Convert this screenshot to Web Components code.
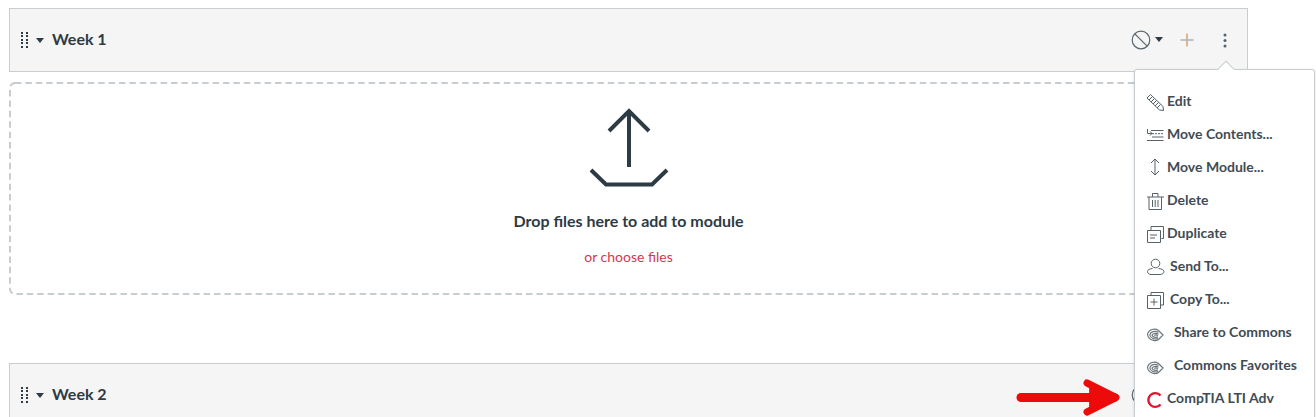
<!DOCTYPE html>
<html>
<head>
<meta charset="utf-8">
<title>Modules</title>
<style>
  html, body { height: 100%; }
  body {
    margin: 0;
    padding: 8px 68px 0 9px;
    box-sizing: border-box;
    height: 417px;
    overflow: hidden;
    position: relative;
    background: #fff;
    font-family: Lato, "Liberation Sans", sans-serif;
    color: #2d3b45;
  }
  svg.i { width: 22px; height: 22px; fill: none; stroke: #56626a; stroke-width: 1; display: block; }
</style>
</head>
<body>
  <module-header>Week 1</module-header>
  <drop-zone></drop-zone>
  <module-header style="margin-top:68px">Week 2</module-header>

  <module-menu>
    <menu-item><svg class="i" slot="icon" viewBox="0 0 22 22"><path d="M3 7 6.500 3.500 19 15.500 19.500 19.500 15.500 19Z"/><path d="M5 9 8.500 5.500M7 11 10.500 7.500M9 13 12.500 9.500M11 15 14.500 11.500M13 17 16.500 13.500"/></svg>Edit</menu-item>
    <menu-item><svg class="i" slot="icon" viewBox="0 0 22 22"><path d="M7 6.500H19.500M8 13H19.500M3 16.500H19.500"/><path d="M8 9.700H19.500" stroke-dasharray="2 1"/><path d="M3.500 5V9.500H8M6 7.500 8 9.500 6 11.500"/></svg>Move Contents...</menu-item>
    <menu-item><svg class="i" slot="icon" viewBox="0 0 22 22"><path d="M11 2V18M7 6 11 2 15 6M7 14 11 18 15 14"/></svg>Move Module...</menu-item>
    <menu-item><svg class="i" slot="icon" viewBox="0 0 22 22"><path d="M3 7H20M8.500 7V3.500H14V7M5 7V19.500H17.500V7M8.500 10V17M11.200 10V17M14 10V17"/></svg>Delete</menu-item>
    <menu-item><svg class="i" slot="icon" viewBox="0 0 22 22"><path d="M7 7V3.500H19.500V15.500H17.500"/><path d="M3.500 7.500H16.500V19.500H3.500ZM6 12H13M6 15H11"/></svg>Duplicate</menu-item>
    <menu-item gap="3"><svg class="i" slot="icon" viewBox="0 0 22 22"><circle cx="11.500" cy="7.500" r="4.300"/><path d="M8.500 12.500C6 12.800 3.500 13.500 3.500 15.500 3.500 17.500 5.500 18.500 7 18.500H16C18 18.500 20 17.500 20 15.500 20 13.500 17 12.800 14.500 12.500"/></svg>Send To...</menu-item>
    <menu-item gap="3"><svg class="i" slot="icon" viewBox="0 0 22 22"><path d="M7 6V3.500H19.500V16H17"/><path d="M3.500 6.500H16.500V19.500H3.500ZM10 9.500V16.500M6.500 13H13.500"/></svg>Copy To...</menu-item>
    <menu-item gap="7"><svg class="i" slot="icon" viewBox="0 0 22 22" style="stroke:#6a757c;stroke-width:1.200"><path d="M19 13 14.500 8.500C11 6 4.500 7 3.500 12.500 4.500 18 11 20 14.500 17.500Z"/><path d="M14.500 10.500C11 8.500 6.500 9.500 5.800 13 6.500 16.500 11 18 14 16.200"/><path d="M14.500 12.300C12 10.800 8.500 11.300 8 13.200 8.500 15 12 16 14 14.800"/><path d="M14 13.500C12.500 12.800 10.800 13 10.300 13.500"/></svg>Share to Commons</menu-item>
    <menu-item gap="7"><svg class="i" slot="icon" viewBox="0 0 22 22" style="stroke:#6a757c;stroke-width:1.200"><path d="M19 13 14.500 8.500C11 6 4.500 7 3.500 12.500 4.500 18 11 20 14.500 17.500Z"/><path d="M14.500 10.500C11 8.500 6.500 9.500 5.800 13 6.500 16.500 11 18 14 16.200"/><path d="M14.500 12.300C12 10.800 8.500 11.300 8 13.200 8.500 15 12 16 14 14.800"/><path d="M14 13.500C12.500 12.800 10.800 13 10.300 13.500"/></svg>Commons Favorites</menu-item>
    <menu-item><svg class="i" slot="icon" viewBox="0 0 22 22" style="stroke:#e2142d;stroke-width:2.400"><path d="M16.500 7.500A6.900 6.900 0 1 0 16.500 16.500"/></svg>CompTIA LTI Adv</menu-item>
  </module-menu>

  <red-arrow></red-arrow>

<script>
const iconDrag = `<svg class="drag" width="8" height="16" viewBox="0 0 8 16" fill="#2d3b45">
  <rect x="1" y="0" width="2" height="2"/><rect x="1" y="3" width="2" height="2"/><rect x="1" y="7" width="2" height="2"/><rect x="1" y="10" width="2" height="2"/><rect x="1" y="14" width="2" height="2"/>
  <rect x="6" y="0" width="2" height="2"/><rect x="6" y="3" width="2" height="2"/><rect x="6" y="7" width="2" height="2"/><rect x="6" y="10" width="2" height="2"/><rect x="6" y="14" width="2" height="2"/>
</svg>`;

const headerTemplate = document.createElement('template');
headerTemplate.innerHTML = `
  <style>
  :host {
    display: flex;
    align-items: center;
    height: 64px;
    box-sizing: border-box;
    border: 1px solid #c7cdd1;
    background: #f5f5f5;
    padding: 0 20px 0 10px;
    color: #2d3b45;
    font: bold 16px Lato, "Liberation Sans", sans-serif;
  }
  .drag { margin-bottom: 1px; }
  .caret { width: 0; height: 0; margin-left: 8px; border: 4px solid transparent; border-top: 5px solid #2d3b45; border-bottom: 0; }
  .title { margin: 0 0 4px 8px; flex: 1; }
  .actions { display: flex; align-items: center; }
  .caret2 { width: 0; height: 0; margin: 0 0 2px 4px; border: 4.500px solid transparent; border-top: 5px solid #2d3b45; border-bottom: 0; }
  .plus { margin-left: 17px; }
  .dots { margin-left: 29px; }
  svg { display: block; }
  </style>
  ${iconDrag}
  <span class="caret"></span>
  <span class="title"><slot></slot></span>
  <div class="actions">
    <svg width="20" height="20" viewBox="0 0 20 20" fill="none" stroke="#59666e" stroke-width="1.200"><circle cx="10" cy="10" r="8.800"/><path d="M3.800 3.800 16.200 16.200"/></svg>
    <span class="caret2"></span>
    <svg class="plus" width="14" height="14" viewBox="0 0 14 14" stroke="#d3a26c" stroke-width="1.500"><path d="M7 0.500V13.500"/><path d="M0.500 7H13.500" stroke="#aab2b8"/></svg>
    <svg class="dots" width="4" height="15" viewBox="0 0 4 15" fill="#4f6470"><circle cx="2" cy="2" r="1.500"/><circle cx="2" cy="7.500" r="1.500"/><circle cx="2" cy="13" r="1.500"/></svg>
  </div>
`;

class ModuleHeader extends HTMLElement {
  constructor() {
    super();
    const shadow = this.attachShadow({ mode: 'open' });
    shadow.append(headerTemplate.content.cloneNode(true));
  }
}
customElements.define('module-header', ModuleHeader);

const dropTemplate = document.createElement('template');
dropTemplate.innerHTML = `
  <style>
  :host {
    display: flex;
    flex-direction: column;
    align-items: center;
    position: relative;
    height: 213px;
    box-sizing: border-box;
    margin-top: 10px;
    padding-top: 26px;
    font-family: Lato, "Liberation Sans", sans-serif;
  }
  svg { display: block; }
  .frame { position: absolute; left: 0; top: 0; width: 100%; height: 100%; }
  .frame rect {
    x: 1px;
    y: 1px;
    width: calc(100% - 2px);
    height: calc(100% - 2px);
    rx: 5px;
    fill: none;
    stroke: #c7cdd1;
    stroke-width: 2;
    stroke-dasharray: 6.500 3.900;
  }
  .msg { margin-top: 23px; font-size: 16px; font-weight: bold; line-height: 20px; color: #2d3b45; }
  .link { margin-top: 16px; font-size: 14px; line-height: 20px; color: #d1394f; }
  </style>
  <svg class="frame"><rect></rect></svg>
  <svg width="82" height="80" viewBox="0 0 82 80" fill="none" stroke="#2d3b45" stroke-width="4">
    <path d="M41 59V3M21 23 41 3 61 23"/>
    <path d="M3 62 18 76.500H64L79 62"/>
  </svg>
  <div class="msg">Drop files here to add to module</div>
  <div class="link">or choose files</div>
`;

class DropZone extends HTMLElement {
  constructor() {
    super();
    const shadow = this.attachShadow({ mode: 'open' });
    shadow.append(dropTemplate.content.cloneNode(true));
  }
}
customElements.define('drop-zone', DropZone);

const menuTemplate = document.createElement('template');
menuTemplate.innerHTML = `
  <style>
  :host {
    position: absolute;
    left: 1134px;
    top: 69px;
    width: 181px;
    height: 360px;
    box-sizing: border-box;
    padding-top: 15px;
    background: #fff;
    border: 1px solid #c7cdd1;
    border-radius: 3px;
    box-shadow: 0 1px 3px rgba(0, 0, 0, .15);
  }
  .tip {
    position: absolute;
    left: 85px;
    top: -7px;
    width: 12px;
    height: 12px;
    box-sizing: border-box;
    background: #fff;
    border-left: 1px solid #c7cdd1;
    border-top: 1px solid #c7cdd1;
    transform: rotate(45deg);
  }
  </style>
  <div class="tip"></div>
  <slot></slot>
`;

class ModuleMenu extends HTMLElement {
  constructor() {
    super();
    const shadow = this.attachShadow({ mode: 'open' });
    shadow.append(menuTemplate.content.cloneNode(true));
  }
}
customElements.define('module-menu', ModuleMenu);

const itemTemplate = document.createElement('template');
itemTemplate.innerHTML = `
  <style>
  :host {
    display: flex;
    align-items: center;
    height: 33px;
    padding-left: 9px;
    color: #3f4c55;
    font: bold 14px Lato, "Liberation Sans", sans-serif;
    white-space: nowrap;
  }
  .icon { width: 22px; height: 22px; flex: none; margin-right: 1px; }
  .label { margin: 0 0 2px var(--gap, 0px); }
  </style>
  <span class="icon"><slot name="icon"></slot></span>
  <span class="label"><slot></slot></span>
`;

class MenuItem extends HTMLElement {
  constructor() {
    super();
    const shadow = this.attachShadow({ mode: 'open' });
    shadow.append(itemTemplate.content.cloneNode(true));
  }

  connectedCallback() {
    if (this.hasAttribute('gap')) {
      this.style.setProperty('--gap', this.getAttribute('gap') + 'px');
    }
  }
}
customElements.define('menu-item', MenuItem);

class RedArrow extends HTMLElement {
  constructor() {
    super();
    const shadow = this.attachShadow({ mode: 'open' });
    shadow.innerHTML = `
      <style>
      :host { position: absolute; left: 1016px; top: 379px; width: 106px; height: 38px; }
      svg { display: block; }
      </style>
      <svg width="106" height="38" viewBox="0 0 106 38" fill="none" stroke="#ec0a0a" stroke-linecap="round" stroke-linejoin="round">
        <path d="M5 18.500H98" stroke-width="9"/>
        <path d="M71 4 100 18.500 71 33" stroke-width="7"/>
        <path d="M74 6 99 18.500 74 31Z" fill="#ec0a0a" stroke-width="1"/>
      </svg>
    `;
  }
}
customElements.define('red-arrow', RedArrow);
</script>
</body>
</html>
